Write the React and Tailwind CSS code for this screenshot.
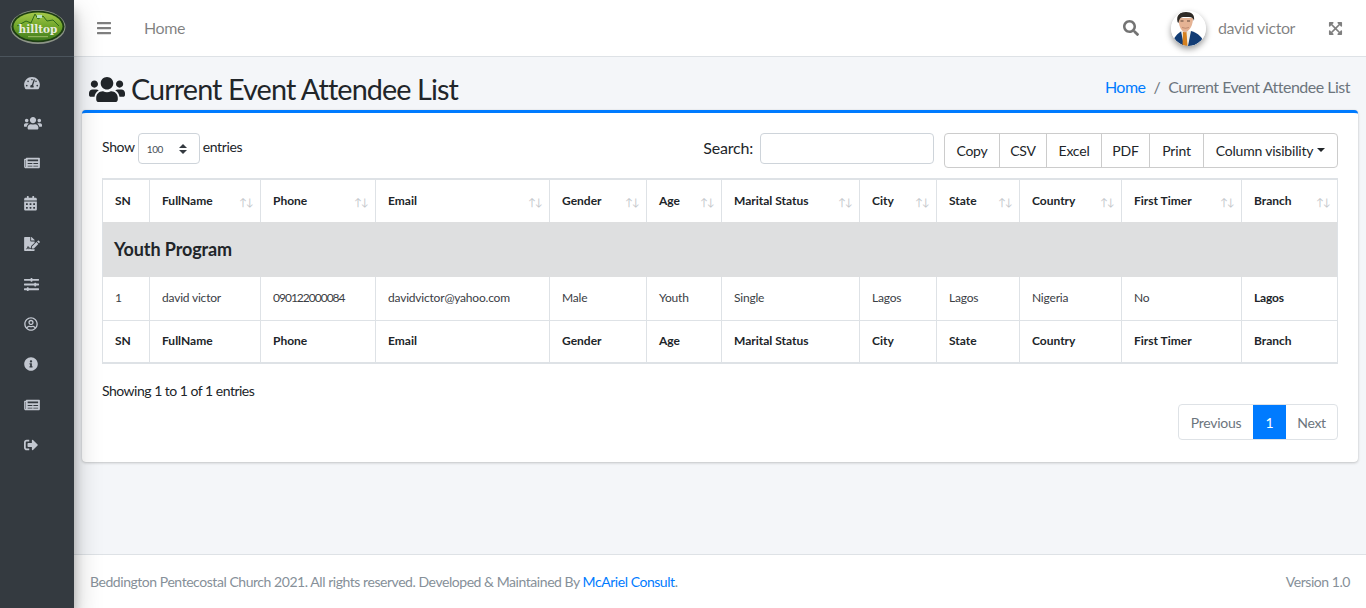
import React from "react";
import {
  FaBars, FaSearch, FaExpandArrowsAlt, FaUsers, FaTachometerAlt, FaNewspaper, FaCalendarAlt,
  FaFileSignature, FaSlidersH, FaRegUserCircle, FaInfoCircle, FaSignOutAlt,
} from "react-icons/fa";

const navIcons = [
  ["w-[16px] h-[14px]", FaTachometerAlt], ["w-[18px] h-[14.5px]", FaUsers], ["w-[16px] h-[14px]", FaNewspaper], ["w-[13px] h-[14.5px]", FaCalendarAlt],
  ["w-[16px] h-[14px]", FaFileSignature], ["w-[15px] h-[15px]", FaSlidersH], ["w-[14px] h-[14px]", FaRegUserCircle], ["w-[14px] h-[14px]", FaInfoCircle],
  ["w-[16px] h-[14px]", FaNewspaper], ["w-[14px] h-[14px]", FaSignOutAlt],
];

const cols = [
  ["SN", 47], ["FullName", 111], ["Phone", 115], ["Email", 174], ["Gender", 97], ["Age", 75],
  ["Marital Status", 138], ["City", 77], ["State", 83], ["Country", 102], ["First Timer", 120], ["Branch", 96],
];

const row = ["1", "david victor", "090122000084", "davidvictor@yahoo.com", "Male", "Youth", "Single", "Lagos", "Lagos", "Nigeria", "No", "Lagos"];

const buttons = [["Copy", "w-[55px]"], ["CSV", "w-[47px]"], ["Excel", "w-[55px]"], ["PDF", "w-[48px]"], ["Print", "w-[54px]"]];

function Logo() {
  return (
    <svg width="56" height="36" viewBox="0 0 56 36" className="block">
      <defs>
        <linearGradient id="lg" x1="0" y1="0" x2="0" y2="1">
          <stop offset="0" stopColor="#a5c94a" />
          <stop offset="0.5" stopColor="#6fa52a" />
          <stop offset="1" stopColor="#3f7a1c" />
        </linearGradient>
      </defs>
      <ellipse cx="28" cy="18" rx="27.5" ry="17" fill="#8d9488" />
      <ellipse cx="28" cy="17.5" rx="26.5" ry="15.8" fill="#1d3d12" />
      <ellipse cx="28" cy="17.5" rx="24.5" ry="14" fill="url(#lg)" />
      <path d="M7 17 L16 12 L21 14 L25 5 L28 10 L33 7 L37 12 L43 11 L49 17" fill="none" stroke="#2f6a1a" strokeWidth="1" />
      <rect x="27" y="6" width="5" height="3" fill="#b6e0c0" />
      <text x="28" y="23.5" textAnchor="middle" fontFamily="'DejaVu Serif', serif" fontWeight="700" fontSize="10.5" fill="#e8ecdf">hilltop</text>
      <rect x="18" y="27" width="20" height="1.2" fill="#8fb25a" />
    </svg>
  );
}

function Avatar() {
  return (
    <svg width="35" height="35" viewBox="0 0 35 35" className="block rounded-full shadow-[0_3px_6px_rgba(0,0,0,0.4)]">
      <circle cx="17.5" cy="17.5" r="17.5" fill="#ffffff" />
      <clipPath id="av"><circle cx="17.5" cy="17.5" r="17.5" /></clipPath>
      <g clipPath="url(#av)">
        <path d="M1 35 C2 26 7 22 11 20 L20 20 C27 22 32 26 34 35 Z" fill="#123c74" />
        <path d="M10 20 L20 20 L17 35 L13 35 Z" fill="#f0eee6" />
        <path d="M12 21 L15.5 21 L16.5 35 L11.5 35 Z" fill="#d6811f" />
        <path d="M7.5 7 C7.5 14 9.5 20 14 21.5 C19 20 22 14 22 7 Z" fill="#e5b394" />
        <path d="M6.5 11 C5 4 9 1 15 1 C21 1 24 4 23 10 C22.5 7.5 21 6 18 6 L12 6 C9.5 6 8 8 7.5 12 Z" fill="#2e2a26" />
        <path d="M11 16.5 Q14.5 18 18 16.5" stroke="#a8705a" strokeWidth="0.6" fill="none" />
        <rect x="9.5" y="9.5" width="3" height="1" fill="#5d4437" />
        <rect x="16" y="9.5" width="3" height="1" fill="#5d4437" />
      </g>
    </svg>
  );
}

function App() {
  return (
    <div className="flex h-[608px] w-[1366px] overflow-hidden bg-[#f4f6f9] text-[#212529] font-['Lato','Noto_Sans',sans-serif]">
      <aside className="relative z-10 w-[74px] shrink-0 bg-[#343a40] shadow-[0_14px_28px_rgba(0,0,0,0.25),0_10px_10px_rgba(0,0,0,0.22)]">
        <div className="flex h-[57px] items-start justify-center border-b border-[#4b545c] pl-[2px] pt-[9px]">
          <Logo />
        </div>
        <nav className="flex flex-col pt-[6px]">
          {navIcons.map(([s, Icon], i) => (
            <div key={i} className="flex h-[40.2px] items-center pl-[24px] text-[#c2c7d0]">
              <Icon className={s} />
            </div>
          ))}
        </nav>
      </aside>

      <div className="flex min-w-0 flex-1 flex-col">
        <header className="flex h-[57px] shrink-0 items-center border-b border-[#dee2e6] bg-white text-[16px] tracking-[-0.4px] text-[rgba(0,0,0,0.5)]">
          <FaBars className="ml-[23px] h-[16px] w-[14px] text-[rgba(0,0,0,0.5)]" />
          <span className="ml-[33px]">Home</span>
          <FaSearch className="ml-auto h-[16px] w-[16px] text-[rgba(0,0,0,0.55)]" />
          <div className="ml-[32px]"><Avatar /></div>
          <span className="ml-[12px] w-[79px] whitespace-nowrap">david victor</span>
          <FaExpandArrowsAlt className="ml-[31px] mr-[23px] h-[15px] w-[15px] text-[rgba(0,0,0,0.5)]" />
        </header>

        <main className="flex flex-1 flex-col px-[8px]">
          <div className="flex h-[53px] items-center justify-between">
            <h1 className="flex items-center gap-[6px] pl-[7px] pt-[12px] text-[28.8px] leading-none tracking-[-0.9px] text-[#212529]">
              <FaUsers className="h-[29px] w-[36px]" />
              <span>Current Event Attendee List</span>
            </h1>
            <div className="flex items-center pr-[8px] pt-[7px] text-[16px] tracking-[-0.5px] text-[#6c757d] whitespace-nowrap">
              <span className="text-[#007bff]">Home</span>
              <span className="px-[8px]">/</span>
              <span>Current Event Attendee List</span>
            </div>
          </div>

          <section className="h-[352px] rounded-[4px] border-t-[3px] border-[#007bff] bg-white px-[20px] pt-[20px] shadow-[0_0_1px_rgba(0,0,0,0.125),0_1px_3px_rgba(0,0,0,0.2)]">
            <div className="flex h-[45px] items-start">
              <div className="flex items-center gap-[3px] text-[14px] leading-none tracking-[-0.35px]">
                <span className="mb-[3px]">Show</span>
                <div className="flex h-[31px] w-[62px] items-center justify-between rounded-[4px] border border-[#ced4da] px-[8px] text-[10px] text-[#495057]">
                  <span>100</span>
                  <svg width="10" height="12" viewBox="0 0 10 12" className="mr-[3px]"><path d="M1 5 L5 1 L9 5 Z M1 7 L5 11 L9 7 Z" fill="#343a40" /></svg>
                </div>
                <span className="mb-[3px]">entries</span>
              </div>
              <div className="ml-auto flex items-center text-[16px] tracking-[-0.2px]">
                <span className="mr-[7px] mb-[1px]">Search:</span>
                <div className="h-[31px] w-[174px] rounded-[4px] border border-[#ced4da] bg-white" />
              </div>
              <div className="ml-[10px] flex h-[35px] w-[394px] rounded-[4px] border border-[#ccc] text-[14px] tracking-[-0.2px] text-[#212529]">
                {buttons.map(([b, w]) => (
                  <div key={b} className={`flex ${w} items-center justify-center border-r border-[#ccc]`}>{b}</div>
                ))}
                <div className="flex flex-1 items-center justify-center gap-[4px] whitespace-nowrap">
                  <span>Column visibility</span>
                  <span className="mb-[2px] h-0 w-0 border-x-[4px] border-t-[4px] border-x-transparent border-t-[#212529]" />
                </div>
              </div>
            </div>

            <table className="w-[1236px] table-fixed border-collapse text-[12px] text-[#212529]">
              <colgroup>
                {cols.map(([n, w]) => <col key={n} style={{ width: w }} />)}
              </colgroup>
              <thead>
                <tr className="h-[43px] border-t-[2px] border-[#dee2e6]">
                  {cols.map(([n], i) => (
                    <th key={n} className="border-x border-[#dee2e6] px-[12px] text-left font-bold">
                      <div className="flex items-center justify-between whitespace-nowrap">
                        <span>{n}</span>
                        {i > 0 && (
                          <span className="-mr-[5px] mt-[3px] text-[10.5px] font-normal leading-none tracking-[-1px] text-[#c3c7cb]">↑↓</span>
                        )}
                      </div>
                    </th>
                  ))}
                </tr>
              </thead>
              <tbody>
                <tr className="h-[55px] bg-[#dedfe0]">
                  <td colSpan={12} className="border-x border-[#dee2e6] px-[11px] text-[18px] font-bold tracking-[-0.1px]">Youth Program</td>
                </tr>
                <tr className="h-[43px] border-b border-[#dee2e6] text-[#3b4045]">
                  {row.map((c, i) => (
                    <td key={i} className={`border-x border-[#dee2e6] px-[12px] whitespace-nowrap ${i === 2 ? "tracking-[-1px]" : "tracking-[-0.2px]"} ${i === 11 ? "font-bold text-[#212529]" : ""}`}>{c}</td>
                  ))}
                </tr>
              </tbody>
              <tfoot>
                <tr className="h-[43px] border-b-[2px] border-[#dee2e6]">
                  {cols.map(([n]) => (
                    <th key={n} className="border-x border-[#dee2e6] px-[12px] text-left font-bold">{n}</th>
                  ))}
                </tr>
              </tfoot>
            </table>

            <div className="mt-[17px] text-[14px] leading-[20px] tracking-[-0.5px]">Showing 1 to 1 of 1 entries</div>
            <div className="mt-[3px] flex justify-end">
              <div className="flex h-[36px] overflow-hidden rounded-[4px] border border-[#dee2e6] text-[14px] tracking-[-0.3px] text-[#6c757d]">
                <div className="flex w-[74px] items-center justify-center">Previous</div>
                <div className="flex w-[33px] items-center justify-center bg-[#007bff] text-white">1</div>
                <div className="flex w-[51px] items-center justify-center">Next</div>
              </div>
            </div>
          </section>
        </main>

        <footer className="flex h-[54px] shrink-0 items-center justify-between border-t border-[#dee2e6] bg-white px-[16px] pb-[1px] text-[14px] tracking-[-0.45px] text-[#869099]">
          <span>Beddington Pentecostal Church 2021. All rights reserved. Developed &amp; Maintained By <span className="text-[#007bff]">McAriel Consult</span>.</span>
          <span>Version 1.0</span>
        </footer>
      </div>
    </div>
  );
}

export default App;
